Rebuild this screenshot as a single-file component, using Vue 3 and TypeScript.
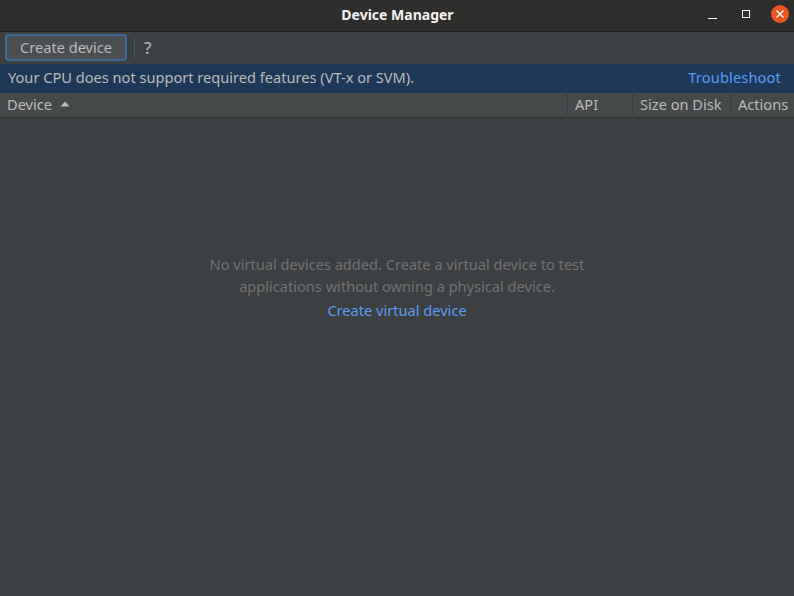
<script setup lang="ts">
const columns = [
  { label: 'API', width: 65 },
  { label: 'Size on Disk', width: 98 },
  { label: 'Actions', width: 64 },
]
</script>

<template>
  <div class="window">
    <header class="titlebar">
      <span class="title">Device Manager</span>
      <div class="controls">
        <svg class="ctl ctl-min" width="12" height="12" viewBox="0 0 12 12"><path d="M1 10.5h9" stroke="#fff" stroke-width="1" /></svg>
        <svg class="ctl ctl-max" width="12" height="12" viewBox="0 0 12 12"><rect x="1.5" y="2.5" width="7" height="7" fill="none" stroke="#fff" /></svg>
        <svg class="ctl" width="18" height="18" viewBox="0 0 18 18">
          <circle cx="9" cy="9" r="9" fill="#e95420" />
          <path d="M5.5 5.5l7 7M12.5 5.5l-7 7" stroke="#fff" stroke-width="1.4" />
        </svg>
      </div>
    </header>

    <div class="toolbar">
      <button class="create">Create device</button>
      <span class="sep"></span>
      <span class="help">?</span>
    </div>

    <div class="banner">
      <span>Your CPU does not support required features (VT-x or SVM).</span>
      <a class="link">Troubleshoot</a>
    </div>

    <div class="thead">
      <div class="th th-device">
        Device
        <svg width="10" height="6" viewBox="0 0 10 6"><path d="M5 0.5L9.5 5.5H0.5z" fill="#bbbbbb" /></svg>
      </div>
      <div v-for="col in columns" :key="col.label" class="th" :style="{ width: col.width + 'px' }">{{ col.label }}</div>
    </div>

    <main class="empty">
      <p class="msg">No virtual devices added. Create a virtual device to test<br />applications without owning a physical device.</p>
      <a class="link">Create virtual device</a>
    </main>
  </div>
</template>

<style>
html, body { margin: 0; background: #3c3f41; }
</style>

<style scoped>
.window {
  width: 794px;
  height: 596px;
  display: flex;
  flex-direction: column;
  background: #3c3f41;
  color: #bbbbbb;
  font-family: "Noto Sans", sans-serif;
  font-size: 14.6px;
  overflow: hidden;
}

.titlebar {
  height: 32px;
  flex: none;
  background: #302e2d;
  border-bottom: 1px solid #1f1f1f;
  box-sizing: border-box;
  display: flex;
  align-items: center;
  justify-content: center;
  position: relative;
}

.title {
  color: #f2f2f2;
  font-weight: 700;
  font-size: 14px;
  margin-top: -2px;
  padding-left: 1px;
}

.controls {
  position: absolute;
  right: 5px;
  top: 5px;
  display: flex;
  align-items: center;
}

.ctl-min { margin-right: 22px; margin-top: -1px; }
.ctl-max { margin-right: 18px; margin-top: -1px; }

.toolbar {
  height: 32px;
  flex: none;
  display: flex;
  align-items: center;
  padding-left: 5px;
  padding-bottom: 1px;
  box-sizing: border-box;
}

.create {
  width: 122px;
  height: 27px;
  padding: 0 0 2px;
  box-sizing: border-box;
  background: #4b4f52;
  border: 2px solid #3f6a96;
  border-radius: 4px;
  color: #bbbbbb;
  font: inherit;
}

.sep {
  width: 1px;
  height: 20px;
  margin-left: 7px;
  background: #515658;
}

.help {
  margin-left: 9px;
  font-size: 17px;
  font-weight: 500;
  color: #afb1b3;
}

.banner {
  height: 29px;
  flex: none;
  background: #1d3857;
  display: flex;
  align-items: center;
  justify-content: space-between;
  padding: 0 13px 3px 8px;
  box-sizing: border-box;
}

.banner .link { letter-spacing: 0.15px; }

.link { color: #589df6; }

.thead {
  height: 25px;
  flex: none;
  display: flex;
  background: #45494a;
  border-bottom: 1px solid #323232;
  box-sizing: border-box;
  padding-bottom: 2px;
}

.th {
  display: flex;
  align-items: center;
  gap: 8px;
  box-sizing: border-box;
  padding-left: 7px;
  border-left: 1px solid #393c3d;
  white-space: nowrap;
}

.th-device {
  flex: 1;
  border-left: none;
}

.empty {
  flex: 1;
  display: flex;
  flex-direction: column;
  align-items: center;
  padding-top: 135px;
  box-sizing: border-box;
}

.msg {
  margin: 0 0 3px;
  text-align: center;
  line-height: 22px;
  color: #727272;
}
</style>
